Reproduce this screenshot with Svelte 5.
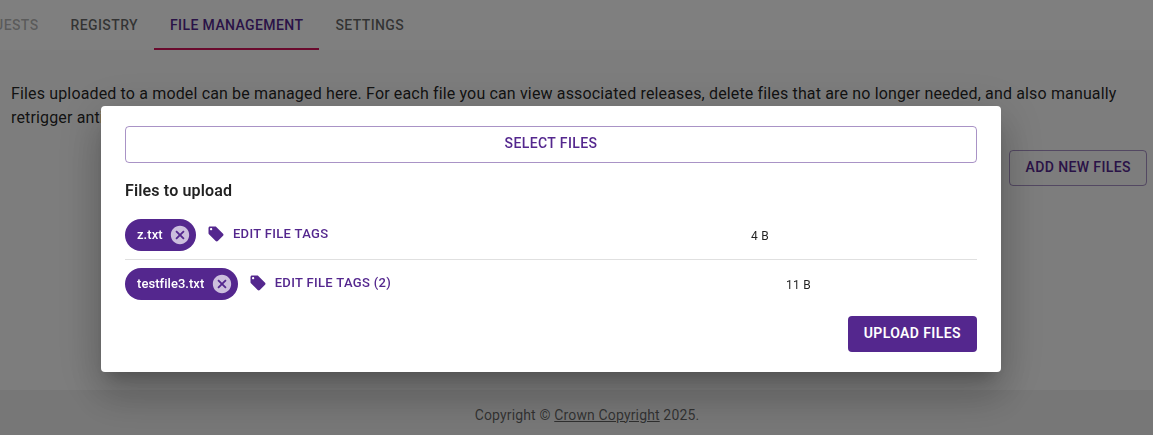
<script>
  const tabs = [
    { label: "Requests", faded: true },
    { label: "Registry" },
    { label: "File Management", active: true },
    { label: "Settings" },
  ];

  const files = [
    { name: "z.txt", tags: "Edit file tags", size: "4 B", sizeAt: 626 },
    { name: "testfile3.txt", tags: "Edit file tags (2)", size: "11 B", sizeAt: 661 },
  ];
</script>

<div class="page">
  <nav class="tabs">
    <div class="tab-strip">
      {#each tabs as tab}
        <button class="tab" class:active={tab.active} class:faded={tab.faded} type="button">
          {tab.label}
        </button>
      {/each}
    </div>
  </nav>

  <main class="content">
    <p>
      Files uploaded to a model can be managed here. For each file you can view associated releases,
      delete files that are no longer needed, and also manually retrigger antivirus scans.
    </p>
    <div class="actions">
      <button class="btn outlined" type="button">Add new files</button>
    </div>
  </main>

  <footer class="footer">
    <span>Copyright © <u>Crown Copyright</u> 2025.</span>
  </footer>
</div>

<div class="backdrop">
  <div class="dialog">
    <button class="btn select" type="button">Select files</button>
    <h2>Files to upload</h2>

    <div class="file-list">
      {#each files as file}
        <div class="file-row" style="grid-template-columns: {file.sizeAt}px 1fr">
          <div class="file-main">
            <span class="chip">
              <span class="chip-label">{file.name}</span>
              <svg class="chip-delete" viewBox="0 0 24 24" aria-hidden="true">
                <path d="M12 2C6.47 2 2 6.47 2 12s4.47 10 10 10 10-4.47 10-10S17.53 2 12 2zm5 13.59L15.59 17 12 13.41 8.41 17 7 15.59 10.59 12 7 8.41 8.41 7 12 10.59 15.59 7 17 8.41 13.41 12 17 15.59z" />
              </svg>
            </span>
            <button class="tags" type="button">
              <svg class="tag-icon" viewBox="0 0 24 24" aria-hidden="true">
                <path d="M21.41 11.58l-9-9C12.05 2.22 11.55 2 11 2H4c-1.1 0-2 .9-2 2v7c0 .55.22 1.05.59 1.42l9 9c.36.36.86.58 1.41.58.55 0 1.05-.22 1.41-.59l7-7c.37-.36.59-.86.59-1.41 0-.55-.23-1.06-.59-1.42zM5.5 7C4.67 7 4 6.33 4 5.5S4.67 4 5.5 4 7 4.67 7 5.5 6.33 7 5.5 7z" />
              </svg>
              <span class="tags-label">{file.tags}</span>
            </button>
          </div>
          <span class="size">{file.size}</span>
        </div>
      {/each}
    </div>

    <div class="dialog-actions">
      <button class="btn contained" type="button">Upload files</button>
    </div>
  </div>
</div>

<style>
  :global(body) {
    margin: 0;
    font-family: Roboto, "Liberation Sans", sans-serif;
    color: rgba(0, 0, 0, 0.87);
    background: #fafafa;
  }

  .page {
    height: 435px;
    display: flex;
    flex-direction: column;
    overflow: hidden;
  }

  button {
    font-family: inherit;
    cursor: pointer;
  }

  .tabs {
    height: 50px;
    flex: none;
    overflow: hidden;
    background: #fff;
  }

  .tab-strip {
    display: flex;
    margin-left: -49.5px;
    width: max-content;
  }

  .tab {
    height: 50px;
    padding: 2px 16px 0;
    border: 0;
    border-bottom: 2px solid transparent;
    background: none;
    font-size: 14px;
    font-weight: 500;
    letter-spacing: 0.4px;
    text-transform: uppercase;
    color: rgba(0, 0, 0, 0.6);
  }

  .tab.faded {
    color: rgba(0, 0, 0, 0.3);
  }

  .tab.active {
    color: #54278e;
    border-bottom-color: #d4145a;
  }

  .content {
    flex: 1;
    padding: 32px 6px 0 11px;
  }

  .content p {
    margin: 0;
    font-size: 16px;
    line-height: 24px;
    letter-spacing: 0.15px;
  }

  .actions {
    display: flex;
    justify-content: flex-end;
    margin-top: 20px;
  }

  .btn {
    height: 36px;
    padding: 0 16px;
    border-radius: 4px;
    font-size: 14px;
    font-weight: 500;
    letter-spacing: 0.4px;
    text-transform: uppercase;
  }

  .outlined {
    padding: 0 15px 2px;
    border: 1px solid rgba(84, 39, 142, 0.5);
    background: none;
    color: #54278e;
  }

  .footer {
    height: 45px;
    flex: none;
    display: flex;
    align-items: center;
    justify-content: center;
    box-sizing: border-box;
    padding: 4px 0 0 21px;
    background: #eeeeee;
    font-size: 14px;
    letter-spacing: 0.15px;
    color: rgba(0, 0, 0, 0.6);
  }

  .backdrop {
    position: fixed;
    inset: 0;
    background: rgba(0, 0, 0, 0.5);
  }

  .dialog {
    position: absolute;
    left: 101px;
    top: 106px;
    width: 900px;
    height: 266px;
    box-sizing: border-box;
    padding: 20px 24px;
    background: #fff;
    border-radius: 4px;
    box-shadow: 0 11px 15px -7px rgba(0, 0, 0, 0.2), 0 24px 38px 3px rgba(0, 0, 0, 0.14),
      0 9px 46px 8px rgba(0, 0, 0, 0.12);
  }

  .select {
    display: block;
    width: 100%;
    height: 37px;
    padding-bottom: 4px;
    border: 1px solid rgba(84, 39, 142, 0.5);
    background: none;
    color: #54278e;
  }

  h2 {
    margin: 18px 0 0;
    font-size: 16px;
    line-height: 19px;
    font-weight: 600;
    letter-spacing: 0.15px;
  }

  .file-list {
    margin-top: 19px;
  }

  .file-row {
    display: grid;
    align-items: center;
    height: 32px;
    padding-bottom: 8px;
    margin-bottom: 8px;
    border-bottom: 1px solid #e0e0e0;
  }

  .file-row:last-child {
    border-bottom: 0;
    margin-bottom: 0;
  }

  .file-main {
    display: flex;
    align-items: center;
  }

  .chip {
    display: inline-flex;
    align-items: center;
    height: 32px;
    border-radius: 16px;
    background: #54278e;
    color: #fff;
    font-size: 13px;
    font-weight: 500;
    letter-spacing: 0.05px;
  }

  .chip-label {
    padding: 0 6.3px 0 12px;
    margin-top: -1px;
  }

  .chip-delete {
    width: 22px;
    height: 22px;
    margin-right: 5px;
    fill: rgba(255, 255, 255, 0.7);
  }

  .tags {
    display: inline-flex;
    align-items: center;
    gap: 8px;
    margin-left: 11px;
    padding: 0;
    border: 0;
    background: none;
    color: #54278e;
    font-size: 13px;
    font-weight: 500;
    letter-spacing: 0.33px;
    text-transform: uppercase;
    transform: translateY(-1px);
  }

  .tags-label {
    margin-top: -2px;
  }

  .tag-icon {
    width: 18px;
    height: 18px;
    fill: #54278e;
  }

  .size {
    font-size: 12px;
    letter-spacing: 0.3px;
    padding-top: 2px;
  }

  .dialog-actions {
    position: absolute;
    right: 24px;
    bottom: 20px;
  }

  .contained {
    padding-bottom: 2px;
    border: 0;
    background: #54278e;
    color: #fff;
    font-weight: 600;
  }
</style>
